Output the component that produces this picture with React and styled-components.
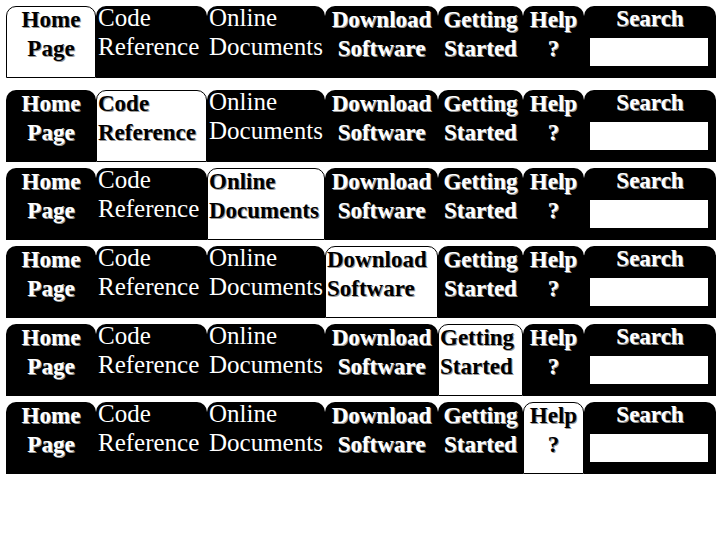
import React from "react";
import styled, { createGlobalStyle, css } from "styled-components";

const Global = createGlobalStyle`
    body {
        margin: 0;
        background: #fff;
        font-family: "Liberation Serif", "Times New Roman", serif;
    }
`;

const Page = styled.div`
    display: flex;
    flex-direction: column;
    gap: 6px;
    padding: 6px;

    & > div:first-child {
        margin-bottom: 6px;
    }
`;

const Bar = styled.div`
    display: flex;
    height: 72px;
    width: 710px;
`;

const Tab = styled.a`
    box-sizing: border-box;
    width: ${(p) => p.$w}px;
    height: 72px;
    flex: none;
    display: flex;
    flex-direction: column;
    gap: 6px;
    padding-top: ${(p) => (p.$bold ? 2 : 0)}px;
    border-radius: 10px 10px 0 0;
    background: #000;
    color: #fff;
    text-align: ${(p) => p.$align};
    padding-left: ${(p) => (p.$align === "left" ? 2 : 0)}px;
    text-decoration: none;

    ${(p) =>
        p.$active &&
        css`
            background: #fff;
            color: #000;
            border: 1px solid #000;
            padding-top: ${p.$bold ? 1 : 0}px;
            padding-left: ${p.$align === "left" ? 1 : 0}px;
        `}
`;

const Line = styled.div`
    line-height: 23px;
    height: 23px;
    white-space: nowrap;
    font-size: ${(p) => (p.$bold ? 23 : 25)}px;
    font-weight: ${(p) => (p.$bold ? 700 : 400)};
    text-shadow: ${(p) => (p.$bold ? "1px 1px 0 #999" : "none")};
`;

const SearchTab = styled.div`
    box-sizing: border-box;
    width: 132px;
    height: 72px;
    flex: none;
    padding-top: 1px;
    border-radius: 10px 10px 0 0;
    background: #000;
    color: #fff;
    display: flex;
    flex-direction: column;
    align-items: center;
`;

const SearchTitle = styled.div`
    font-size: 23px;
    font-weight: 700;
    line-height: 23px;
    height: 23px;
    text-shadow: 1px 1px 0 #999;
`;

const SearchInput = styled.input`
    box-sizing: border-box;
    width: 118px;
    height: 28px;
    margin: 8px 2px 0 0;
    padding: 0;
    border: none;
    background: #fff;
    outline: none;
`;

const tabs = [
    { key: "home", lines: ["Home", "Page"], w: 90, bold: true, align: "center", activeAlign: "center" },
    { key: "code", lines: ["Code", "Reference"], w: 111, bold: false, align: "left", activeAlign: "left" },
    { key: "online", lines: ["Online", "Documents"], w: 118, bold: false, align: "left", activeAlign: "left" },
    { key: "download", lines: ["Download", "Software"], w: 113, bold: true, align: "center", activeAlign: "left" },
    { key: "getting", lines: ["Getting", "Started"], w: 85, bold: true, align: "center", activeAlign: "left" },
    { key: "help", lines: ["Help", "?"], w: 61, bold: true, align: "center", activeAlign: "center" },
];

function NavBar({ active }) {
    return (
        <Bar>
            {tabs.map((t) => {
                const on = t.key === active;
                const bold = t.bold || on;
                return (
                    <Tab
                        key={t.key}
                        href="#"
                        $w={t.w}
                        $bold={bold}
                        $active={on}
                        $align={on ? t.activeAlign : t.align}
                    >
                        {t.lines.map((l) => (
                            <Line key={l} $bold={bold}>
                                {l}
                            </Line>
                        ))}
                    </Tab>
                );
            })}
            <SearchTab>
                <SearchTitle>Search</SearchTitle>
                <SearchInput type="text" />
            </SearchTab>
        </Bar>
    );
}

export default function App() {
    return (
        <>
            <Global />
            <Page>
                {tabs.map((t) => (
                    <NavBar key={t.key} active={t.key} />
                ))}
            </Page>
        </>
    );
}
